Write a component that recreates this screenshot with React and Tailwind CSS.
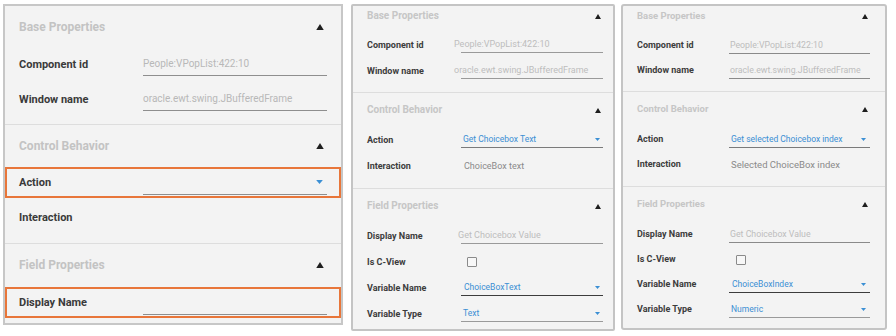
import React from "react";

function Up({ w, h }) {
  return (
    <svg width={w} height={h} viewBox="0 0 10 8" className="shrink-0">
      <path d="M5 0L10 8H0z" fill="#1e1e1e" />
    </svg>
  );
}

function Caret({ w, h }) {
  return (
    <svg width={w} height={h} viewBox="0 0 10 6" className="shrink-0">
      <path d="M0 0H10L5 6z" fill="#3b8fd4" />
    </svg>
  );
}

function LeftPanel() {
  return (
    <div className="w-[340px] h-[321px] shrink-0 border-2 border-[#c7c7c7] bg-[#f3f3f3] overflow-hidden flex flex-col">
      <div className="h-[41px] shrink-0 flex items-center justify-between pl-[14px] pr-[17px]">
        <span className="text-[12px] font-bold text-[#c3c3c3]">Base Properties</span>
        <Up w={8} h={6} />
      </div>
      <div className="h-[35px] shrink-0 flex items-center pl-[14px] pr-[14px]">
        <span className="w-[124px] shrink-0 text-[11px] font-bold text-[#3a3a3a]">Component id</span>
        <div className="flex-1 h-[22px] flex items-center border-b border-[#8e8e8e] text-[10px] text-[#b8b8b8]">People:VPopList:422:10</div>
      </div>
      <div className="h-[35px] shrink-0 flex items-center pl-[14px] pr-[14px]">
        <span className="w-[124px] shrink-0 text-[11px] font-bold text-[#3a3a3a]">Window name</span>
        <div className="flex-1 h-[22px] flex items-center border-b border-[#8e8e8e] text-[10px] text-[#b8b8b8]">oracle.ewt.swing.JBufferedFrame</div>
      </div>
      <div className="h-[7px] shrink-0" />
      <div className="h-px shrink-0 bg-[#dddddd]" />
      <div className="h-[42px] shrink-0 flex items-center justify-between pl-[14px] pr-[17px]">
        <span className="text-[12px] font-bold text-[#c3c3c3]">Control Behavior</span>
        <Up w={8} h={6} />
      </div>
      <div className="h-[31px] shrink-0 border-2 border-[#e8763a] flex items-center pl-[12px] pr-[12px]">
        <span className="w-[124px] shrink-0 text-[11px] font-bold text-[#3a3a3a]">Action</span>
        <div className="flex-1 h-[24px] flex items-center justify-end pr-[4px] border-b border-[#8e8e8e]">
          <Caret w={7} h={4} />
        </div>
      </div>
      <div className="h-[38px] shrink-0 flex items-center pl-[14px]">
        <span className="text-[11px] font-bold text-[#3a3a3a]">Interaction</span>
      </div>
      <div className="h-[7px] shrink-0" />
      <div className="h-px shrink-0 bg-[#dddddd]" />
      <div className="h-[41px] shrink-0 flex items-center justify-between pl-[14px] pr-[17px]">
        <span className="text-[12px] font-bold text-[#c3c3c3]">Field Properties</span>
        <Up w={8} h={6} />
      </div>
      <div className="h-[31px] shrink-0 mt-[2px] border-2 border-[#e8763a] flex items-center pl-[12px] pr-[12px]">
        <span className="w-[124px] shrink-0 text-[11px] font-bold text-[#3a3a3a]">Display Name</span>
        <div className="flex-1 h-[24px] border-b border-[#8e8e8e]" />
      </div>
    </div>
  );
}

function MidPanel() {
  const label = "w-[94px] shrink-0 text-[9px] font-bold text-[#3c3c3c]";
  const head = "text-[10px] font-bold text-[#c6c6c6]";
  return (
    <div className="w-[264px] h-[327px] shrink-0 border-2 border-[#c4c4c4] rounded-[2px] bg-[#f3f3f3] overflow-hidden flex flex-col">
      <div className="h-[20px] shrink-0 flex items-center justify-between pl-[14px] pr-[12px]">
        <span className={head}>Base Properties</span>
        <Up w={6} h={5} />
      </div>
      <div className="h-[6px] shrink-0" />
      <div className="h-[26px] shrink-0 flex items-center pl-[14px] pr-[10px]">
        <span className={label}>Component id</span>
        <div className="flex-1 h-[16px] flex items-center border-b border-[#9a9a9a] text-[9px] text-[#bdbdbd]">
          <span className="-ml-[7px]">People:VPopList:422:10</span>
        </div>
      </div>
      <div className="h-[26px] shrink-0 flex items-center pl-[14px] pr-[10px]">
        <span className={label}>Window name</span>
        <div className="flex-1 h-[16px] flex items-center border-b border-[#9a9a9a] text-[9px] text-[#bdbdbd]">
          <span className="-ml-[7px]">oracle.ewt.swing.JBufferedFrame</span>
        </div>
      </div>
      <div className="h-[8px] shrink-0" />
      <div className="h-px shrink-0 bg-[#dddddd]" />
      <div className="h-[7px] shrink-0" />
      <div className="h-[20px] shrink-0 flex items-center justify-between pl-[14px] pr-[12px]">
        <span className={head}>Control Behavior</span>
        <Up w={6} h={5} />
      </div>
      <div className="h-[7px] shrink-0" />
      <div className="h-[26px] shrink-0 flex items-center pl-[14px] pr-[10px]">
        <span className={label}>Action</span>
        <div className="flex-1 h-[16px] flex items-center justify-between pl-[2px] pr-[3px] border-b border-[#7a7a7a] text-[8.5px] text-[#3b8fd4]">
          <span>Get Choicebox Text</span>
          <Caret w={5} h={3} />
        </div>
      </div>
      <div className="h-[26px] shrink-0 flex items-center pl-[14px] pr-[10px]">
        <span className={label}>Interaction</span>
        <span className="pl-[3px] text-[9px] text-[#8a8a8a]">ChoiceBox text</span>
      </div>
      <div className="h-[9px] shrink-0" />
      <div className="h-px shrink-0 bg-[#dddddd]" />
      <div className="h-[7px] shrink-0" />
      <div className="h-[20px] shrink-0 flex items-center justify-between pl-[14px] pr-[12px]">
        <span className={head}>Field Properties</span>
        <Up w={6} h={5} />
      </div>
      <div className="h-[7px] shrink-0" />
      <div className="h-[26px] shrink-0 flex items-center pl-[14px] pr-[10px]">
        <span className={label}>Display Name</span>
        <div className="flex-1 h-[16px] flex items-center border-b border-[#9a9a9a] text-[9px] text-[#bdbdbd]">
          <span className="-ml-[3px]">Get Choicebox Value</span>
        </div>
      </div>
      <div className="h-[26px] shrink-0 flex items-center pl-[14px] pr-[10px]">
        <span className={label}>Is C-View</span>
        <div className="ml-[6px] w-[10px] h-[10px] border border-[#8a8a8a] rounded-[1px] bg-[#f7f7f7]" />
      </div>
      <div className="h-[26px] shrink-0 flex items-center pl-[14px] pr-[10px]">
        <span className={label}>Variable Name</span>
        <div className="flex-1 h-[16px] flex items-center justify-between pl-[3px] pr-[3px] border-b border-[#3c3c3c] text-[8.5px] text-[#3b8fd4]">
          <span>ChoiceBoxText</span>
          <Caret w={5} h={3} />
        </div>
      </div>
      <div className="h-[26px] shrink-0 flex items-center pl-[14px] pr-[10px]">
        <span className={label}>Variable Type</span>
        <div className="flex-1 h-[16px] flex items-center justify-between pl-[2px] pr-[3px] border-b border-[#9a9a9a] text-[8.5px] text-[#3b8fd4]">
          <span>Text</span>
          <Caret w={5} h={3} />
        </div>
      </div>
    </div>
  );
}

function RightPanel() {
  const label = "w-[92px] shrink-0 text-[9px] font-bold text-[#3c3c3c]";
  const head = "text-[9.5px] font-bold text-[#c6c6c6]";
  return (
    <div className="w-[266px] h-[326px] shrink-0 border-2 border-[#c4c4c4] rounded-[3px] bg-[#f3f3f3] overflow-hidden flex flex-col">
      <div className="h-[20px] shrink-0 flex items-center justify-between pl-[14px] pr-[17px]">
        <span className={head}>Base Properties</span>
        <Up w={6} h={5} />
      </div>
      <div className="h-[7px] shrink-0" />
      <div className="h-[25px] shrink-0 flex items-center pl-[14px] pr-[15px]">
        <span className={label}>Component id</span>
        <div className="flex-1 h-[16px] flex items-center pl-[1px] border-b border-[#8a8a8a] text-[8.75px] text-[#bdbdbd]">People:VPopList:422:10</div>
      </div>
      <div className="h-[25px] shrink-0 flex items-center pl-[14px] pr-[15px]">
        <span className={label}>Window name</span>
        <div className="flex-1 h-[16px] flex items-center pl-[1px] border-b border-[#8a8a8a] text-[8.75px] text-[#bdbdbd]">oracle.ewt.swing.JBufferedFrame</div>
      </div>
      <div className="h-[8px] shrink-0" />
      <div className="h-px shrink-0 bg-[#dddddd]" />
      <div className="h-[7px] shrink-0" />
      <div className="h-[20px] shrink-0 flex items-center justify-between pl-[14px] pr-[17px]">
        <span className={head}>Control Behavior</span>
        <Up w={6} h={5} />
      </div>
      <div className="h-[8px] shrink-0" />
      <div className="h-[25px] shrink-0 flex items-center pl-[14px] pr-[15px]">
        <span className={label}>Action</span>
        <div className="flex-1 h-[16px] flex items-center justify-between pl-[2px] pr-[4px] border-b border-[#7a7a7a] text-[8.5px] text-[#3b8fd4]">
          <span>Get selected Choicebox index</span>
          <Caret w={5} h={3} />
        </div>
      </div>
      <div className="h-[25px] shrink-0 flex items-center pl-[14px] pr-[15px]">
        <span className={label}>Interaction</span>
        <span className="pl-[2px] text-[9.5px] text-[#8a8a8a]">Selected ChoiceBox index</span>
      </div>
      <div className="h-[9px] shrink-0" />
      <div className="h-px shrink-0 bg-[#dddddd]" />
      <div className="h-[7px] shrink-0" />
      <div className="h-[20px] shrink-0 flex items-center justify-between pl-[14px] pr-[17px]">
        <span className={head}>Field Properties</span>
        <Up w={6} h={5} />
      </div>
      <div className="h-[8px] shrink-0" />
      <div className="h-[25px] shrink-0 flex items-center pl-[14px] pr-[15px]">
        <span className={label}>Display Name</span>
        <div className="flex-1 h-[16px] flex items-center pl-[1px] border-b border-[#8a8a8a] text-[8.75px] text-[#bdbdbd]">Get Choicebox Value</div>
      </div>
      <div className="h-[25px] shrink-0 flex items-center pl-[14px] pr-[15px]">
        <span className={label}>Is C-View</span>
        <div className="ml-[7px] w-[10px] h-[10px] border border-[#8a8a8a] rounded-[1px] bg-[#f7f7f7]" />
      </div>
      <div className="h-[25px] shrink-0 flex items-center pl-[14px] pr-[15px]">
        <span className={label}>Variable Name</span>
        <div className="flex-1 h-[16px] flex items-center justify-between pl-[3px] pr-[4px] border-b border-[#3c3c3c] text-[8.5px] text-[#3b8fd4]">
          <span>ChoiceBoxIndex</span>
          <Caret w={5} h={3} />
        </div>
      </div>
      <div className="h-[25px] shrink-0 flex items-center pl-[14px] pr-[15px]">
        <span className={label}>Variable Type</span>
        <div className="flex-1 h-[16px] flex items-center justify-between pl-[2px] pr-[4px] border-b border-[#9a9a9a] text-[8.5px] text-[#3b8fd4]">
          <span>Numeric</span>
          <Caret w={5} h={3} />
        </div>
      </div>
    </div>
  );
}

export default function App() {
  return (
    <div className="w-[896px] h-[336px] bg-white overflow-hidden flex items-start pt-[4px] pl-[3px] font-['Roboto','Noto_Sans',sans-serif] leading-none">
      <LeftPanel />
      <div className="w-[8px] shrink-0" />
      <MidPanel />
      <div className="w-[6px] shrink-0" />
      <RightPanel />
    </div>
  );
}
